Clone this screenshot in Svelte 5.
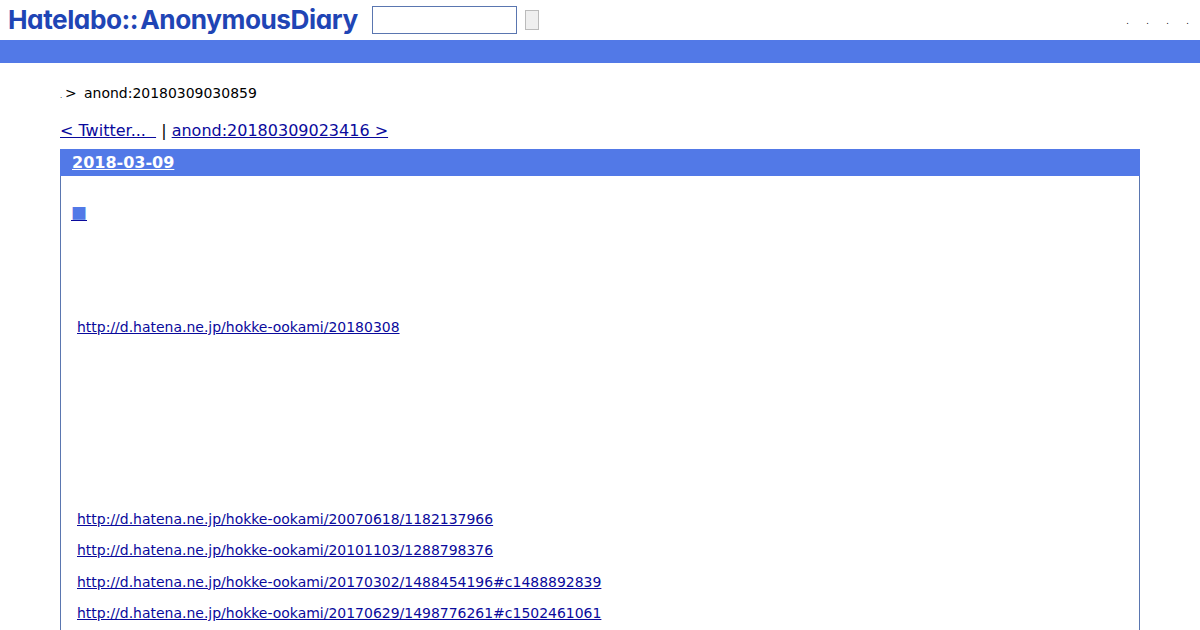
<script>
  const links = [
    'http://d.hatena.ne.jp/hokke-ookami/20070618/1182137966',
    'http://d.hatena.ne.jp/hokke-ookami/20101103/1288798376',
    'http://d.hatena.ne.jp/hokke-ookami/20170302/1488454196#c1488892839',
    'http://d.hatena.ne.jp/hokke-ookami/20170629/1498776261#c1502461061'
  ];
</script>

<div class="page">
  <header class="top">
    <a class="logo" href="#top">Hatelabo::<span class="gap">AnonymousDiary</span></a>
    <form class="search">
      <input type="text" />
      <button type="button"></button>
    </form>
    <nav class="menu">
      <span>.</span><span>.</span><span>.</span><span>.</span>
    </nav>
  </header>
  <div class="band"></div>

  <main class="body">
    <p class="crumb"><span class="dot">.</span><span class="gt">&gt;</span><span>anond:20180309030859</span></p>
    <p class="pager">
      <a href="#prev">&lt; Twitter...&nbsp;&nbsp;</a> | <a href="#next">anond:20180309023416 &gt;</a>
    </p>

    <section class="day">
      <h2><a href="#day">2018-03-09</a></h2>
      <div class="entry">
        <h3><a href="#entry"><span class="mark">■</span></a></h3>
        <p class="first"><a href="#l">http://d.hatena.ne.jp/hokke-ookami/20180308</a></p>
        <div class="list">
          {#each links as link}
            <p><a href="#l">{link}</a></p>
          {/each}
        </div>
      </div>
    </section>
  </main>
</div>

<style>
  :global(body) {
    margin: 0;
    background: #fff;
    overflow: hidden;
  }

  .page {
    height: 630px;
    overflow: hidden;
    font-family: "DejaVu Sans", sans-serif;
    font-size: 13.98px;
    color: #000;
  }

  a {
    color: #0a0a9c;
  }

  .top {
    display: flex;
    align-items: flex-start;
    height: 40px;
    padding-left: 8px;
    box-sizing: border-box;
  }

  .logo {
    width: 364px;
    font-family: Inter, sans-serif;
    font-feature-settings: "cv11" 1;
    font-weight: 700;
    font-size: 26.2px;
    letter-spacing: -0.45px;
    line-height: 39px;
    color: #1f45b5;
    text-decoration: none;
    white-space: nowrap;
  }

  .gap {
    margin-left: 2px;
  }

  .search {
    display: flex;
    align-items: center;
    gap: 8px;
    margin-top: 6px;
  }

  input {
    width: 145px;
    height: 28px;
    box-sizing: border-box;
    border: 1px solid #5a76b0;
    padding: 0;
    background: #fff;
  }

  button {
    width: 14px;
    height: 20px;
    box-sizing: border-box;
    border: 1px solid #bbb;
    background: #efefef;
    padding: 0;
  }

  .menu {
    display: flex;
    gap: 17px;
    margin-left: auto;
    padding-right: 11px;
    font-size: 8px;
    line-height: 8px;
    margin-top: 18px;
  }

  .menu span {
    width: 3px;
    text-align: center;
  }

  .band {
    height: 23px;
    background: #5279e7;
  }

  .body {
    padding: 0 60px;
  }

  .crumb {
    display: flex;
    align-items: baseline;
    margin: 22px 0 0;
    line-height: 17px;
    height: 17px;
  }

  .dot {
    font-size: 7px;
    width: 5px;
  }

  .gt {
    width: 19px;
  }

  .pager {
    margin: 19px 0 0;
    font-size: 16px;
    line-height: 20px;
  }

  .day {
    margin-top: 8px;
    border: 1px solid #5a76b0;
    border-top: 0;
    height: 500px;
  }

  h2 {
    margin: 0 -1px;
    height: 27px;
    padding-left: 12px;
    background: #5279e7;
    font-size: 16px;
    line-height: 27px;
  }

  h2 a {
    color: #fff;
  }

  .entry {
    padding: 0 10px;
  }

  h3 {
    margin: 26px 0 0;
    height: 20px;
    font-size: 16px;
    line-height: 20px;
    font-weight: 400;
  }

  .mark {
    font-family: "Noto Sans CJK JP", sans-serif;
    color: #5279e7;
  }

  .first {
    margin: 95px 0 0 6px;
    line-height: 20px;
  }

  .list {
    margin-top: 172px;
    margin-left: 6px;
  }

  .list p {
    margin: 0 0 11.33px;
    line-height: 20px;
  }
</style>
